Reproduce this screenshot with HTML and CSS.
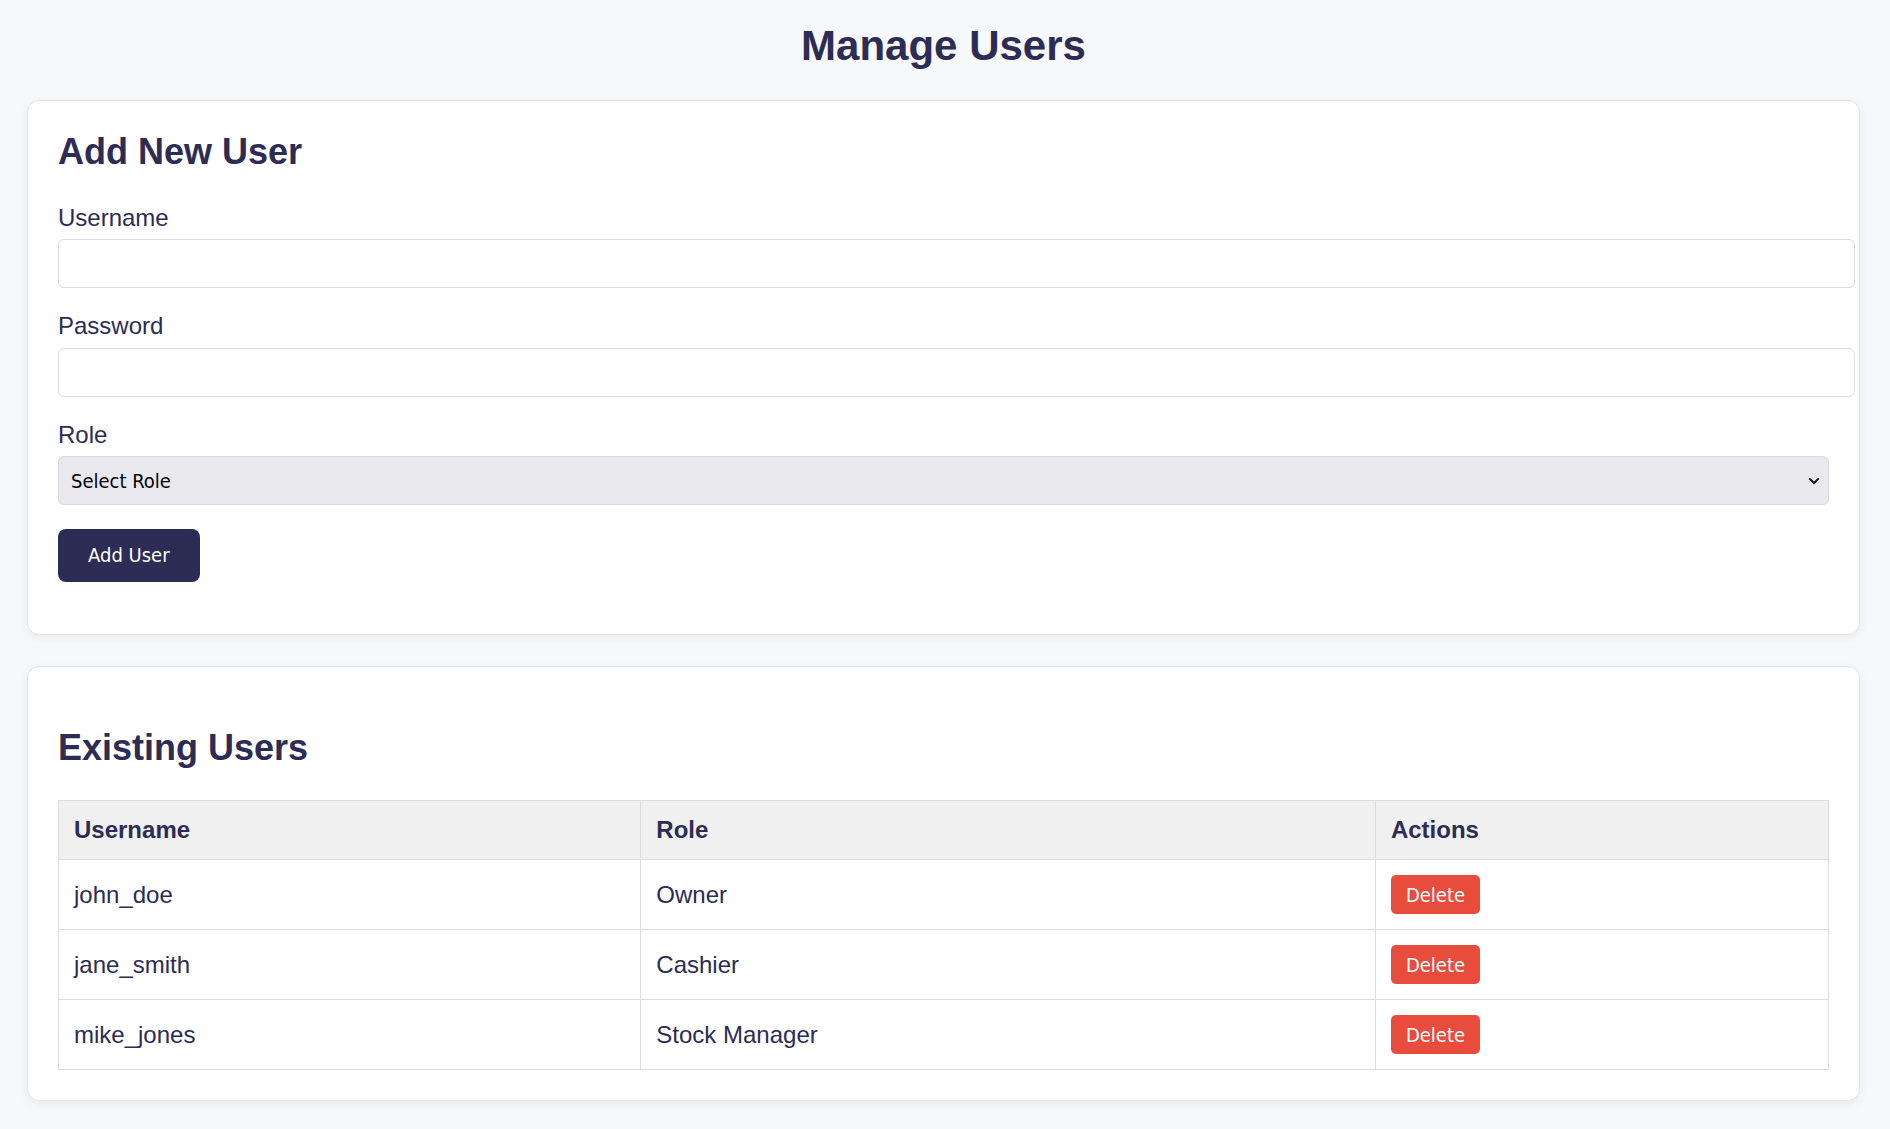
FILE: index.html
```html
<!DOCTYPE html>
<html lang="en">
<head>
<meta charset="utf-8">
<title>Manage Users</title>
<link rel="stylesheet" href="styles.css">
</head>
<body>
<div class="page">
  <h1 class="title">Manage Users</h1>

  <section class="card">
    <h2 class="card-title">Add New User</h2>
    <form class="user-form">
      <div class="form-group">
        <label class="field-label" for="username">Username</label>
        <input class="text-input" id="username" type="text">
      </div>
      <div class="form-group">
        <label class="field-label" for="password">Password</label>
        <input class="text-input" id="password" type="password">
      </div>
      <div class="form-group">
        <label class="field-label" for="role">Role</label>
        <div class="select-wrap">
          <select class="select-input" id="role">
            <option>Select Role</option>
            <option>Owner</option>
            <option>Cashier</option>
            <option>Stock Manager</option>
          </select>
          <svg class="select-chevron" width="12" height="8" viewBox="0 0 12 8"><polyline points="1.2,1.4 6,6 10.8,1.4" fill="none" stroke="#111" stroke-width="2"/></svg>
        </div>
      </div>
      <div class="form-actions">
        <button type="button" class="btn btn-primary">Add User</button>
      </div>
    </form>
  </section>

  <section class="card">
    <h2 class="card-title card-title-spaced">Existing Users</h2>
    <table class="users-table">
      <thead>
        <tr>
          <th class="col-user">Username</th>
          <th class="col-role">Role</th>
          <th class="col-actions">Actions</th>
        </tr>
      </thead>
      <tbody>
        <tr>
          <td>john_doe</td>
          <td>Owner</td>
          <td><button type="button" class="btn btn-danger">Delete</button></td>
        </tr>
        <tr>
          <td>jane_smith</td>
          <td>Cashier</td>
          <td><button type="button" class="btn btn-danger">Delete</button></td>
        </tr>
        <tr>
          <td>mike_jones</td>
          <td>Stock Manager</td>
          <td><button type="button" class="btn btn-danger">Delete</button></td>
        </tr>
      </tbody>
    </table>
  </section>
</div>
</body>
</html>
```

FILE: styles.css
```css
html, body {
  margin: 0;
  padding: 0;
  background: #f7f8fa;
}

body {
  font-family: "Liberation Sans", Arial, sans-serif;
  font-size: 24px;
  color: #2c2c54;
}

.page {
  padding: 22px 30px 30px 27px;
}

.title {
  margin: 0 0 31px;
  font-size: 42px;
  font-weight: 700;
  text-align: center;
  color: #2c2c54;
  line-height: 47px;
}

.card {
  background: #ffffff;
  border: 1px solid #e3e4e8;
  border-radius: 12px;
  box-shadow: 0 3px 10px rgba(0, 0, 0, 0.06);
  padding: 30px;
  margin-bottom: 31px;
}

.card-title {
  margin: 0 0 30.5px;
  font-size: 36px;
  font-weight: 700;
  color: #2c2c54;
  line-height: normal;
}

.card-title-spaced {
  margin-top: 30px;
  margin-bottom: 31px;
}

.user-form {
  margin: 0;
}

.form-group {
  margin-bottom: 24px;
}

.field-label {
  display: block;
  margin-bottom: 7.5px;
  font-size: 24px;
  line-height: normal;
  color: #2c2c54;
}

.text-input {
  display: block;
  box-sizing: content-box;
  width: 100%;
  height: 24px;
  padding: 11.5px 12px;
  margin: 0;
  border: 1px solid #dcdcdf;
  border-radius: 6px;
  background: #fff;
  font-family: "Liberation Sans", Arial, sans-serif;
  font-size: 20px;
  outline: none;
}

.select-wrap {
  position: relative;
}

.select-input {
  display: block;
  box-sizing: border-box;
  width: 100%;
  height: 49px;
  margin: 0;
  padding: 0 12px;
  -webkit-appearance: none;
  appearance: none;
  background: #e9e9ed;
  border: 1px solid #d9d9de;
  border-radius: 6px;
  font-family: "DejaVu Sans Condensed", "Open Sans", sans-serif;
  font-size: 20px;
  color: #000;
  outline: none;
}

.select-chevron {
  position: absolute;
  right: 9px;
  top: 21px;
  pointer-events: none;
}

.form-actions {
  margin-bottom: 22px;
}

.btn {
  border: 0;
  margin: 0;
  font-family: "DejaVu Sans Condensed", "Open Sans", sans-serif;
  font-size: 20px;
  color: #fff;
  cursor: pointer;
}

.btn-primary {
  background: #2c2c54;
  padding: 15px 30px;
  line-height: 23.4px;
  border-radius: 8px;
}

.btn-danger {
  background: #e74c3c;
  padding: 7.5px 15px;
  line-height: 24px;
  border-radius: 5px;
}

.users-table {
  width: 100%;
  border-collapse: collapse;
  font-size: 24px;
  color: #2c2c54;
}

.users-table th,
.users-table td {
  border: 1px solid #dddddd;
  padding: 15px;
  text-align: left;
  vertical-align: middle;
}

.users-table th {
  background: #f0f0f0;
  font-weight: 700;
  line-height: 28px;
}

.users-table td {
  line-height: 28px;
}

.col-user {
  width: 32.9%;
}

.col-role {
  width: 41.5%;
}
```
